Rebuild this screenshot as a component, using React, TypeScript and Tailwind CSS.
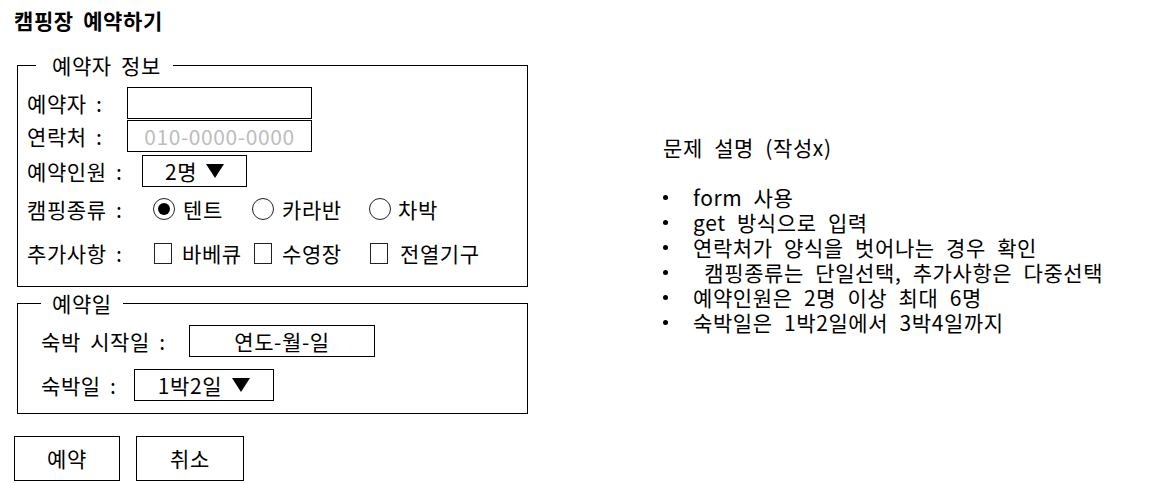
import React from 'react';

const font = "font-['Noto_Sans_CJK_KR','Noto_Sans',sans-serif]";

function Radio({ checked }: { checked?: boolean }) {
  return (
    <span className="flex h-[22px] w-[22px] shrink-0 items-center justify-center rounded-full border border-[#222]">
      {checked && <span className="h-[12px] w-[12px] rounded-full bg-black" />}
    </span>
  );
}

function Box() {
  return <span className="block h-[21px] w-[18px] shrink-0 border border-[#222]" />;
}

function Arrow() {
  return (
    <svg width="18" height="14" viewBox="0 0 18 14" className="shrink-0">
      <polygon points="0,0 18,0 9,14" fill="#000" />
    </svg>
  );
}

const rules = [
  'form 사용',
  'get 방식으로 입력',
  '연락처가 양식을 벗어나는 경우 확인',
  '\u00a0캠핑종류는 단일선택, 추가사항은 다중선택',
  '예약인원은 2명 이상 최대 6명',
  '숙박일은 1박2일에서 3박4일까지',
];

export default function App() {
  return (
    <div className={`flex bg-white text-black tracking-[0.6px] [word-spacing:4px] ${font}`}>
      {/* 예약 폼 */}
      <div className="w-[663px] shrink-0 pl-[14px] pt-[6px]">
        <h1 className="h-[28px] text-[21px] font-bold leading-[28px] tracking-[0.6px]">캠핑장 예약하기</h1>

        <fieldset className="ml-[3px] mt-[19px] w-[511px] border border-black">
          <legend className="ml-[18px] pl-[16px] pr-[12px] text-[21px] leading-[24px]">예약자 정보</legend>
          <div className="pl-[9px] pt-[10px] pb-[17px] text-[21px] leading-[28px]">
            <div className="flex h-[32px] items-center">
              <span className="w-[100px]">예약자 :</span>
              <input className="h-[32px] w-[185px] border border-black bg-white px-2 text-center outline-none" />
            </div>
            <div className="mt-[1px] flex h-[32px] items-center">
              <span className="w-[100px]">연락처 :</span>
              <input
                placeholder="010-0000-0000"
                className="h-[32px] w-[185px] border border-black bg-white px-1 text-center outline-none placeholder:text-[#bdbdbd]"
              />
            </div>
            <div className="mt-[3px] flex h-[32px] items-center">
              <span className="w-[115px]">예약인원 :</span>
              <div className="flex h-[32px] w-[105px] items-center justify-center gap-[9px] border border-black">
                <span>2명</span>
                <Arrow />
              </div>
            </div>
            <div className="mt-[6px] flex h-[32px] items-center">
              <span className="w-[126px]">캠핑종류 :</span>
              <span className="flex w-[99px] items-center gap-[8px]">
                <Radio checked />
                <span>텐트</span>
              </span>
              <span className="flex w-[117px] items-center gap-[8px]">
                <Radio />
                <span>카라반</span>
              </span>
              <span className="flex items-center gap-[7px]">
                <Radio />
                <span>차박</span>
              </span>
            </div>
            <div className="mt-[12px] flex h-[32px] items-center">
              <span className="w-[127px]">추가사항 :</span>
              <span className="flex w-[100px] items-center gap-[10px]">
                <Box />
                <span>바베큐</span>
              </span>
              <span className="flex w-[116px] items-center gap-[10px]">
                <Box />
                <span>수영장</span>
              </span>
              <span className="flex items-center gap-[12px]">
                <Box />
                <span>전열기구</span>
              </span>
            </div>
          </div>
        </fieldset>

        <fieldset className="ml-[3px] mt-[4px] w-[511px] border border-black">
          <legend className="ml-[23px] px-[11px] text-[21px] leading-[24px]">예약일</legend>
          <div className="pl-[23px] pt-[10px] pb-[12px] text-[21px] leading-[28px]">
            <div className="flex h-[32px] items-center">
              <span className="w-[148px]">숙박 시작일 :</span>
              <div className="flex h-[32px] w-[186px] items-center justify-center border border-black">연도-월-일</div>
            </div>
            <div className="mt-[12px] flex h-[32px] items-center">
              <span className="w-[93px]">숙박일 :</span>
              <div className="flex h-[32px] w-[140px] items-center justify-center gap-[10px] border border-black">
                <span>1박2일</span>
                <Arrow />
              </div>
            </div>
          </div>
        </fieldset>

        <div className="mt-[22px] flex text-[21px]">
          <button className="flex h-[45px] w-[106px] items-center justify-center border border-black bg-white">예약</button>
          <button className="ml-[16px] flex h-[45px] w-[108px] items-center justify-center border border-black bg-white">취소</button>
        </div>
      </div>

      {/* 문제 설명 */}
      <div className="pt-[135px] text-[21px] leading-[25px] [word-spacing:6px]">
        <p>문제 설명 (작성x)</p>
        <ul className="mt-[25px]">
          {rules.map((r) => (
            <li key={r} className="flex items-center">
              <span className="flex w-[30px] shrink-0 items-center">
                <span className="h-[5px] w-[5px] rounded-full bg-black" />
              </span>
              <span className="whitespace-pre">{r}</span>
            </li>
          ))}
        </ul>
      </div>
    </div>
  );
}
